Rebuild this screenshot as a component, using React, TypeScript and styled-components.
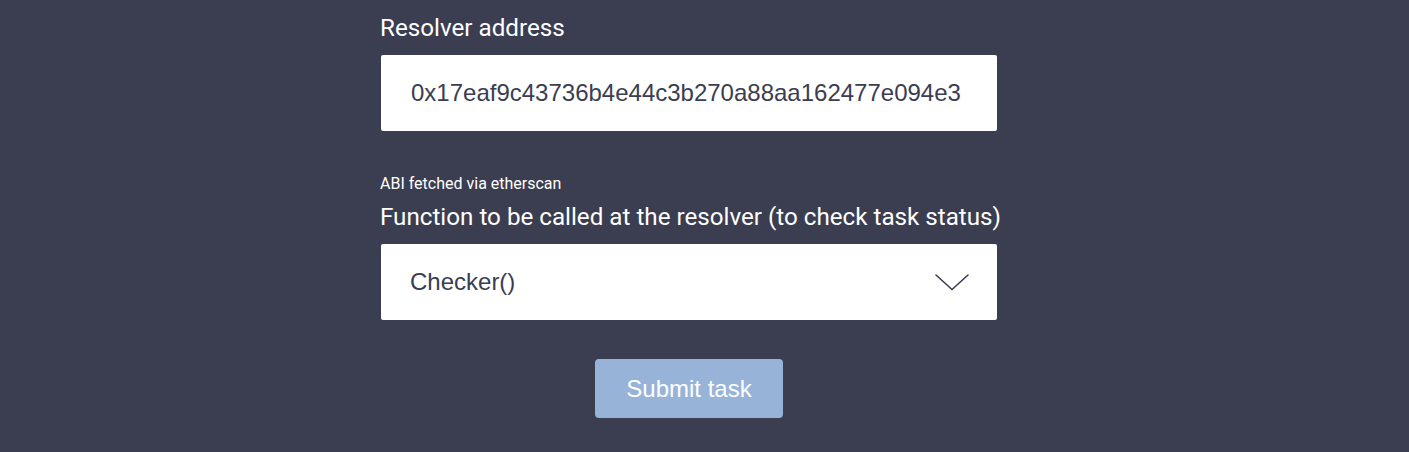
import React from "react";
import styled, { createGlobalStyle } from "styled-components";

const GlobalStyle = createGlobalStyle`
  html, body {
    margin: 0;
    padding: 0;
    background: #3b3d51;
  }
  body {
    font-family: Roboto, "Noto Sans", sans-serif;
  }
`;

const Page = styled.main`
  display: flex;
  justify-content: center;
  padding-right: 32px;
  min-height: 452px;
  box-sizing: border-box;
`;

const Form = styled.form`
  width: 617px;
  padding-top: 14px;
  display: flex;
  flex-direction: column;
`;

const Label = styled.label<{ $gap?: number }>`
  display: block;
  margin-top: ${(p) => p.$gap ?? 0}px;
  color: #ffffff;
  font-family: Roboto, sans-serif;
  font-size: 24.2px;
  line-height: 28px;
  font-weight: 400;
  white-space: nowrap;
`;

const Note = styled.div`
  color: #ffffff;
  font-family: Roboto, sans-serif;
  font-size: 16px;
  line-height: 19px;
  margin-top: 43px;
`;

const Field = styled.input`
  display: block;
  box-sizing: border-box;
  margin: 13px 0 0 1px;
  width: 616px;
  height: 76px;
  border: none;
  border-radius: 2px;
  background: #ffffff;
  padding: 0 0 0 30px;
  color: #3b3d51;
  font-family: "Liberation Sans", Arial, sans-serif;
  font-size: 24px;
  outline: none;
`;

const SelectBox = styled.div`
  display: flex;
  align-items: center;
  justify-content: space-between;
  box-sizing: border-box;
  margin: 13px 0 0 1px;
  width: 616px;
  height: 76px;
  border-radius: 2px;
  background: #ffffff;
  padding: 0 28px 0 29px;
  color: #3b3d51;
  font-family: "Liberation Sans", Arial, sans-serif;
  font-size: 24px;
  cursor: pointer;
`;

const Chevron = styled.svg`
  width: 34px;
  height: 17px;
  display: block;
`;

const ButtonRow = styled.div`
  display: flex;
  justify-content: center;
  margin-top: 39px;
  padding-left: 1px;
`;

const SubmitButton = styled.button`
  width: 188px;
  height: 59px;
  border: none;
  border-radius: 4px;
  background: #97b4d8;
  color: #ffffff;
  font-family: "Liberation Sans", Arial, sans-serif;
  font-size: 24px;
  cursor: not-allowed;
`;

export default function App() {
  return (
    <>
      <GlobalStyle />
      <Page>
        <Form onSubmit={(e) => e.preventDefault()}>
          <Label htmlFor="resolver">Resolver address</Label>
          <Field
            id="resolver"
            readOnly
            value="0x17eaf9c43736b4e44c3b270a88aa162477e094e3"
          />
          <Note>ABI fetched via etherscan</Note>
          <Label $gap={10}>Function to be called at the resolver (to check task status)</Label>
          <SelectBox role="button">
            <span>Checker()</span>
            <Chevron viewBox="0 0 34 17" fill="none">
              <polyline
                points="1,1 17,15.5 33,1"
                stroke="#3b3d51"
                strokeWidth="1.6"
                strokeLinecap="round"
                strokeLinejoin="round"
              />
            </Chevron>
          </SelectBox>
          <ButtonRow>
            <SubmitButton type="submit">Submit task</SubmitButton>
          </ButtonRow>
        </Form>
      </Page>
    </>
  );
}
